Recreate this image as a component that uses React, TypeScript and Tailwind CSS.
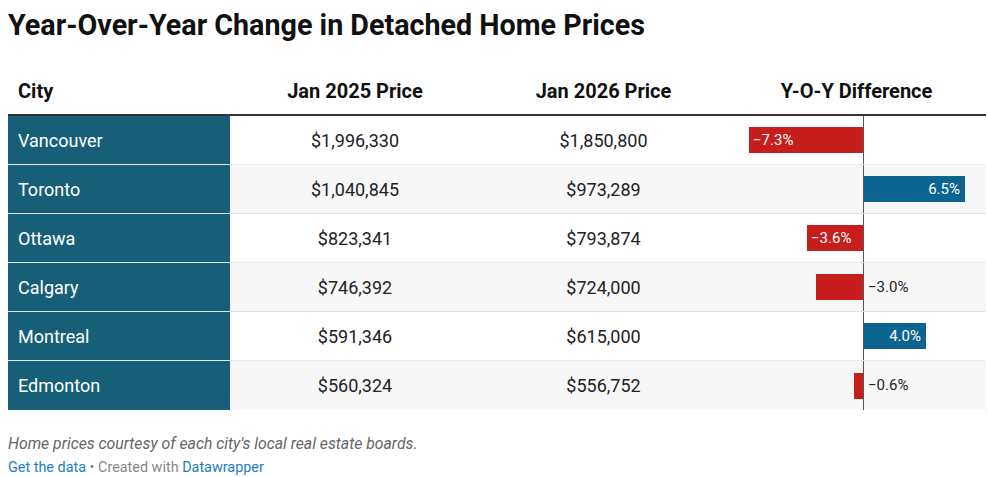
import React from "react";

type Row = { city: string; p25: string; p26: string; pct: number };

const rows: Row[] = [
  { city: "Vancouver", p25: "$1,996,330", p26: "$1,850,800", pct: -7.3 },
  { city: "Toronto", p25: "$1,040,845", p26: "$973,289", pct: 6.5 },
  { city: "Ottawa", p25: "$823,341", p26: "$793,874", pct: -3.6 },
  { city: "Calgary", p25: "$746,392", p26: "$724,000", pct: -3.0 },
  { city: "Montreal", p25: "$591,346", p26: "$615,000", pct: 4.0 },
  { city: "Edmonton", p25: "$560,324", p26: "$556,752", pct: -0.6 },
];

const SCALE = 15.65;

function fmt(v: number) {
  const s = Math.abs(v).toFixed(1) + "%";
  return v < 0 ? "\u2212" + s : s;
}

function Bar({ pct }: { pct: number }) {
  const w = Math.round(Math.abs(pct) * SCALE);
  const inside = Math.abs(pct) > 3.2;
  const label = fmt(pct);
  return (
    <div className="flex h-full items-center pl-[22px]">
      <div className="flex h-full w-[114px] items-center justify-end">
        {pct < 0 && (
          <div
            className="flex h-[26px] items-center bg-[#c71e1d] pl-[4px] text-white"
            style={{ width: w }}
          >
            {inside ? label : ""}
          </div>
        )}
      </div>
      <div className="relative flex h-full w-[110px] items-center">
        <div className="absolute left-0 top-0 h-full w-px bg-[#555]" />
        {pct > 0 && (
          <div
            className="flex h-[26px] items-center justify-end bg-[#0c6591] pr-[5px] text-white"
            style={{ width: w }}
          >
            {inside ? label : ""}
          </div>
        )}
        {pct < 0 && !inside && (
          <span className="pl-[5px] text-[#222]">{label}</span>
        )}
      </div>
    </div>
  );
}

export default function App() {
  return (
    <div
      className="w-[988px] h-[477px] bg-white px-[8px] text-[#222]"
      style={{ fontFamily: "Roboto, 'Liberation Sans', sans-serif" }}
    >
      <div className="h-[66px] pt-[8px]">
        <h1 className="text-[28.7px] leading-[34px] font-bold text-[#111]">
          Year-Over-Year Change in Detached Home Prices
        </h1>
      </div>
      <div className="w-[978px]">
        <div className="flex h-[48px] items-center pt-[2px] text-[20px] font-bold text-[#111]">
          <div className="w-[222px] pl-[10px]">City</div>
          <div className="w-[250px] text-center">Jan 2025 Price</div>
          <div className="w-[247px] text-center">Jan 2026 Price</div>
          <div className="w-[259px] text-center">Y-O-Y Difference</div>
        </div>
        <div className="h-[2px] bg-[#333]" />
        {rows.map((r, i) => (
          <div
            key={r.city}
            className={
              "flex h-[49px] text-[18px] " +
              (i < rows.length - 1 ? "border-b border-[rgba(0,0,0,0.08)] " : "") +
              (i % 2 === 1 ? "bg-[#f7f7f7]" : "bg-white")
            }
          >
            <div className="flex w-[222px] items-center bg-[#175e78] pl-[10px] text-white">
              {r.city}
            </div>
            <div className="flex w-[250px] items-center justify-center">{r.p25}</div>
            <div className="flex w-[247px] items-center justify-center">{r.p26}</div>
            <div className="w-[259px] text-[15px]">
              <Bar pct={r.pct} />
            </div>
          </div>
        ))}
      </div>
      <div className="mt-[24px] text-[15.8px] italic leading-[20px] text-[#666]">
        Home prices courtesy of each city's local real estate boards.
      </div>
      <div className="mt-[4px] text-[14.4px] leading-[20px] text-[#888]">
        <span className="text-[#1b7ec2]">Get the data</span>
        <span> • Created with </span>
        <span className="text-[#1b7ec2]">Datawrapper</span>
      </div>
    </div>
  );
}
